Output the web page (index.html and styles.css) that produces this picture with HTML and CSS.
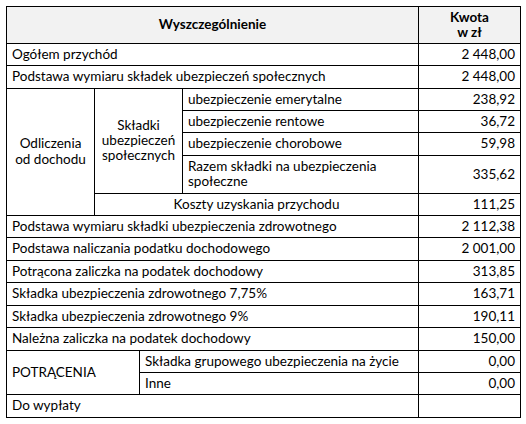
FILE: index.html
```html
<!DOCTYPE html>
<html lang="pl">
<head>
<meta charset="utf-8">
<link rel="stylesheet" href="styles.css">
</head>
<body>
<table class="sheet">
  <colgroup>
    <col class="c-a"><col class="c-b"><col class="c-c"><col class="c-d"><col class="c-e">
  </colgroup>
  <tr class="head">
    <th colspan="4">Wyszczególnienie</th>
    <th>Kwota<br>w zł</th>
  </tr>
  <tr><td colspan="4">Ogółem przychód</td><td class="num">2 448,00</td></tr>
  <tr><td colspan="4">Podstawa wymiaru składek ubezpieczeń społecznych</td><td class="num">2 448,00</td></tr>
  <tr>
    <td rowspan="5" class="center">Odliczenia<br>od dochodu</td>
    <td rowspan="4" colspan="2" class="center">Składki<br>ubezpieczeń<br>społecznych</td>
    <td>ubezpieczenie emerytalne</td><td class="num">238,92</td>
  </tr>
  <tr><td>ubezpieczenie rentowe</td><td class="num">36,72</td></tr>
  <tr><td>ubezpieczenie chorobowe</td><td class="num">59,98</td></tr>
  <tr><td>Razem składki na ubezpieczenia<br>społeczne</td><td class="num">335,62</td></tr>
  <tr><td colspan="3" class="center">Koszty uzyskania przychodu</td><td class="num">111,25</td></tr>
  <tr><td colspan="4">Podstawa wymiaru składki ubezpieczenia zdrowotnego</td><td class="num">2 112,38</td></tr>
  <tr><td colspan="4">Podstawa naliczania podatku dochodowego</td><td class="num">2 001,00</td></tr>
  <tr><td colspan="4">Potrącona zaliczka na podatek dochodowy</td><td class="num">313,85</td></tr>
  <tr><td colspan="4">Składka ubezpieczenia zdrowotnego 7,75%</td><td class="num">163,71</td></tr>
  <tr><td colspan="4">Składka ubezpieczenia zdrowotnego 9%</td><td class="num">190,11</td></tr>
  <tr><td colspan="4">Należna zaliczka na podatek dochodowy</td><td class="num">150,00</td></tr>
  <tr>
    <td rowspan="2" colspan="2">POTRĄCENIA</td>
    <td colspan="2">Składka grupowego ubezpieczenia na życie</td><td class="num">0,00</td>
  </tr>
  <tr><td colspan="2">Inne</td><td class="num">0,00</td></tr>
  <tr><td colspan="4">Do wypłaty</td><td class="num"></td></tr>
</table>
</body>
</html>
```

FILE: styles.css
```css
html, body {
  margin: 0;
  padding: 0;
  background: #ffffff;
}
body {
  padding: 6px 0 0 6px;
  font-family: "Lato", "Liberation Sans", sans-serif;
  font-size: 13.5px;
  color: #000000;
}
.sheet {
  border-collapse: collapse;
  table-layout: fixed;
  width: 515px;
}
.c-a { width: 88px; }
.c-b { width: 45px; }
.c-c { width: 43px; }
.c-d { width: 236px; }
.c-e { width: 102px; }
.sheet td,
.sheet th {
  border: 1px solid #000000;
  padding: 3px 5px;
  line-height: 15.4px;
  text-align: left;
  vertical-align: middle;
  white-space: nowrap;
  overflow: hidden;
}
.sheet .head th {
  background: #f2f2f2;
  font-weight: bold;
  text-align: center;
  padding: 2.5px 5px;
}
.sheet .center { text-align: center; }
.sheet .num { text-align: right; }
```
